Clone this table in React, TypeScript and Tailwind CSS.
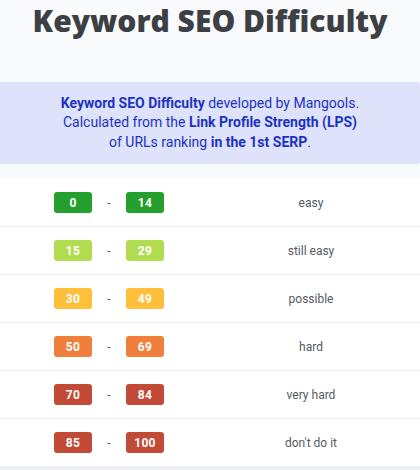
import React from 'react';

const ROWS = [
  { from: '0', to: '14', label: 'easy', color: 'bg-[#25a02e]' },
  { from: '15', to: '29', label: 'still easy', color: 'bg-[#b1dc4f]' },
  { from: '30', to: '49', label: 'possible', color: 'bg-[#ffbf3b]' },
  { from: '50', to: '69', label: 'hard', color: 'bg-[#ef7f3b]' },
  { from: '70', to: '84', label: 'very hard', color: 'bg-[#c14b36]' },
  { from: '85', to: '100', label: "don't do it", color: 'bg-[#c14b36]' },
];

function Badge({ value, color }: { value: string; color: string }) {
  return (
    <span className={`${color} w-[38px] h-[21px] rounded-[3px] flex items-center justify-center text-white text-[12px] font-bold tracking-[0.3px]`}>
      {value}
    </span>
  );
}

export default function App() {
  return (
    <div className="w-[420px] h-[470px] overflow-hidden bg-[#f9fafc] font-['Roboto',sans-serif]">
      <div className="h-[82px] pt-[1px]">
        <h1 className="text-center text-[30px] leading-[40px] font-extrabold text-[#3c4044] font-['Open_Sans',sans-serif] tracking-[0px]">
          Keyword SEO Difficulty
        </h1>
      </div>

      <div className="h-[82px] bg-[#dfe2fb] rounded-r-[3px] flex flex-col items-center justify-center text-[14px] leading-[19.5px] text-[#1b33c3] text-center">
        <p><b className="font-bold">Keyword SEO Difficulty</b> developed by Mangools.</p>
        <p>Calculated from the <b className="font-bold">Link Profile Strength (LPS)</b></p>
        <p>of URLs ranking <b className="font-bold">in the 1st SERP</b>.</p>
      </div>

      <div className="h-[15px]" />

      <div className="bg-white">
        {ROWS.map((r) => (
          <div key={r.label} className="grid grid-cols-[218px_186px] h-[48px] items-center border-b border-[#eeeeef]">
            <div className="flex items-center justify-center">
              <Badge value={r.from} color={r.color} />
              <span className="w-[34px] text-center text-[12px] text-[#555]">-</span>
              <Badge value={r.to} color={r.color} />
            </div>
            <div className="text-center text-[12px] text-[#555a5f]">{r.label}</div>
          </div>
        ))}
      </div>
      <div className="h-[3px] bg-[#eeeff2]" />
    </div>
  );
}
